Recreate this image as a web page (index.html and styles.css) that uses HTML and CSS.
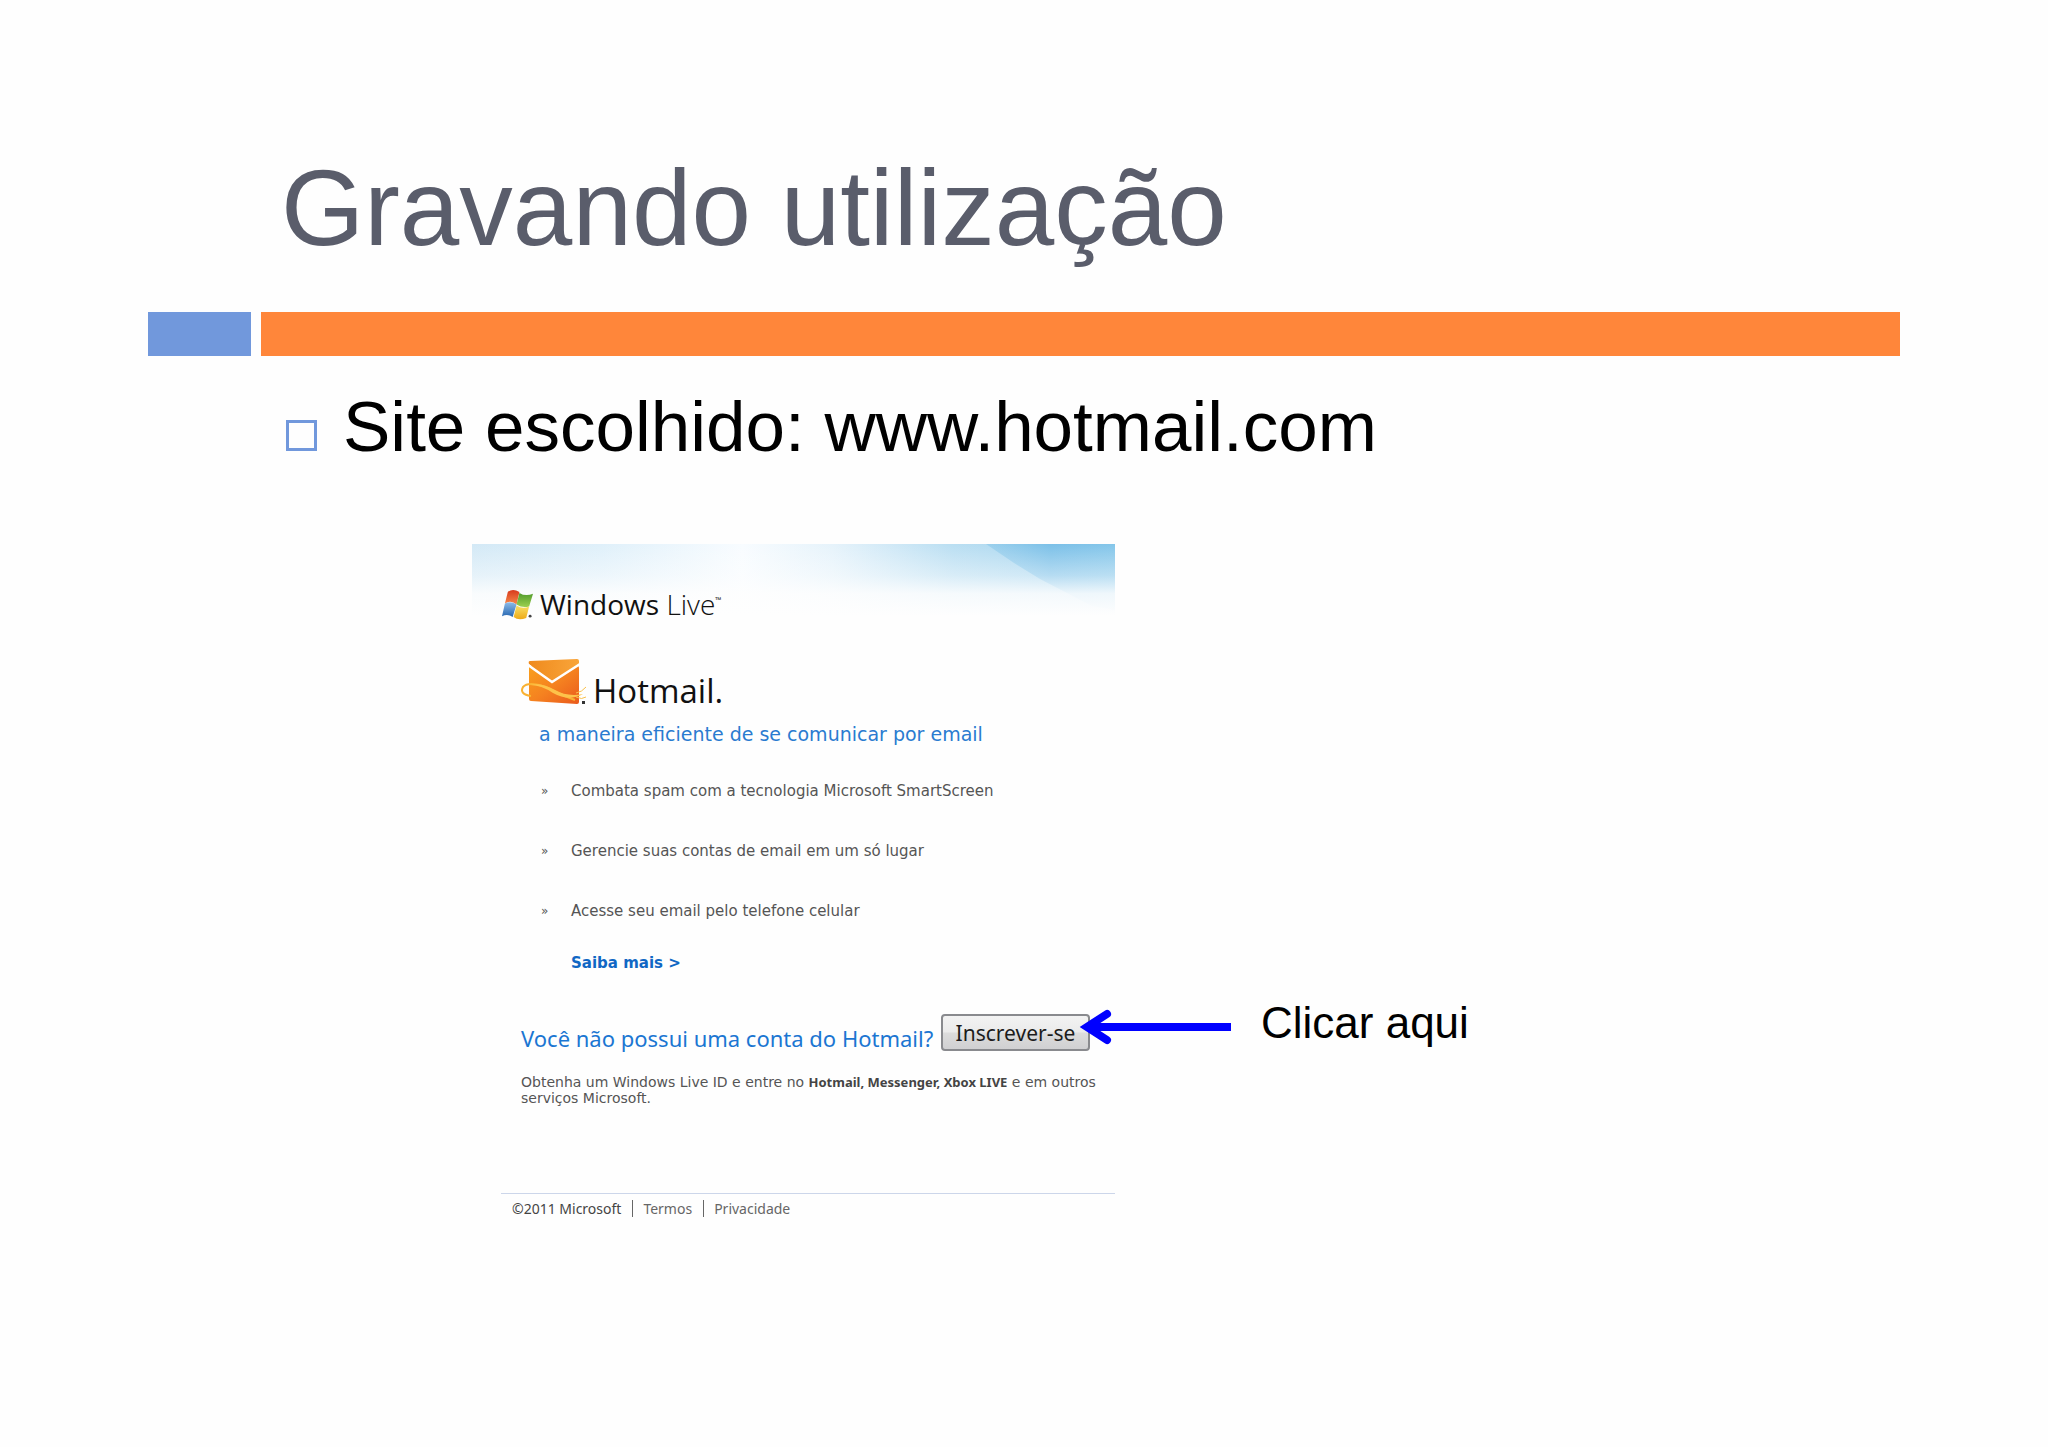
FILE: index.html
```html
<!DOCTYPE html>
<html lang="pt-BR">
<head>
<meta charset="utf-8">
<meta name="viewport" content="width=device-width, initial-scale=1">
<title>Gravando utilização</title>
<link rel="stylesheet" href="styles.css">
</head>
<body>
<main class="slide">
  <h1 class="slide-title">Gravando utilização</h1>
  <div class="slide-rule"><span class="rule-accent"></span><span class="rule-main"></span></div>
  <ul class="slide-points">
    <li class="slide-point">Site escolhido: www.hotmail.com</li>
  </ul>
  <div class="demo">
    <section class="live">
      <header class="live-header">
        <svg class="live-sky" viewBox="0 0 643 90" preserveAspectRatio="none" aria-hidden="true">
          <defs>
            <linearGradient id="sky" x1="0" x2="1" y1="0" y2="0">
              <stop offset="0" stop-color="#d3e9f6"/><stop offset=".2" stop-color="#dff0fa"/>
              <stop offset=".42" stop-color="#f8fcff"/><stop offset=".56" stop-color="#e6f3fb"/>
              <stop offset=".75" stop-color="#b9def2"/><stop offset="1" stop-color="#a0d2ee"/>
            </linearGradient>
            <linearGradient id="ray" x1="0" x2="1" y1="0" y2="0">
              <stop offset="0" stop-color="#9bd0ed"/><stop offset=".5" stop-color="#7bc0e8"/><stop offset="1" stop-color="#84c6ea"/>
            </linearGradient>
            <linearGradient id="fade" x1="0" x2="0" y1="0" y2="1">
              <stop offset="0" stop-color="#fefefe" stop-opacity="0"/><stop offset=".35" stop-color="#fefefe" stop-opacity=".45"/>
              <stop offset=".55" stop-color="#fefefe" stop-opacity=".88"/>
              <stop offset=".8" stop-color="#fefefe"/>
            </linearGradient>
          </defs>
          <rect width="643" height="90" fill="url(#sky)"/>
          <path d="M514 0L542 19L568 35L620 62L643 66V0Z" fill="url(#ray)"/>
          <rect width="643" height="90" fill="url(#fade)"/>
        </svg>
        <div class="live-brand">
          <svg class="flag" viewBox="0 0 32 32" aria-hidden="true">
            <defs>
              <linearGradient id="fr" x2="0" y2="1"><stop stop-color="#d8391c"/><stop offset="1" stop-color="#f58a4b"/></linearGradient>
              <linearGradient id="fg" x2="0" y2="1"><stop stop-color="#4f9a2c"/><stop offset="1" stop-color="#9bd04f"/></linearGradient>
              <linearGradient id="fb" x2="0" y2="1"><stop stop-color="#8cbbe8"/><stop offset="1" stop-color="#2465b0"/></linearGradient>
              <linearGradient id="fy" x2="0" y2="1"><stop stop-color="#f9e166"/><stop offset="1" stop-color="#eea916"/></linearGradient>
            </defs>
            <path d="M6 3Q11 -1 18 3L15 16Q9 11 3 15Z" fill="url(#fr)"/>
            <path d="M18 4Q24 8 32 5L28 18Q21 20 15 16Z" fill="url(#fg)"/>
            <path d="M3 15Q9 12 15 16L11 29Q6 25 0 28Z" fill="url(#fb)"/>
            <path d="M15 17Q21 21 28 18L25 30Q17 33 12 29Z" fill="url(#fy)"/>
            <circle cx="29" cy="28" r="1.500" fill="#444"/>
          </svg>
          <span class="live-name">Windows <span class="live-light">Live</span></span><sup class="live-tm">™</sup>
        </div>
      </header>
      <div class="live-body">
        <h2 class="mail-brand">
          <svg class="mail-icon" viewBox="0 0 66 46" aria-hidden="true">
            <defs>
              <linearGradient id="env" x2="1" y2="1"><stop stop-color="#f9a01c"/><stop offset=".5" stop-color="#f58220"/><stop offset="1" stop-color="#ea5a1c"/></linearGradient>
              <linearGradient id="flap" x2="1" y2="0"><stop stop-color="#ef8a1d"/><stop offset="1" stop-color="#f9a53a"/></linearGradient>
            </defs>
            <path d="M8 7L57 7Q58 7 58 9V43Q58 45 56 45L10 42Q8 42 8 40Z" fill="url(#env)"/>
            <path d="M9 2L56 0Q58 0 58 2V6L31 23L8 5Q7 2 9 2Z" fill="url(#flap)"/>
            <path d="M7 6L31 23L59 5" fill="none" stroke="#fff" stroke-width="2.500"/>
            <path d="M10 37Q-2 35 2 28Q7 22 25 28Q43 37 54 41" fill="none" stroke="#f9b233" stroke-width="2"/>
            <path d="M9 26Q20 23 34 31Q46 38 62 35Q48 43 32 34Q20 26 9 26Z" fill="#fdc24a"/>
            <path d="M55 34Q61 33 65 28M55 38Q61 41 65 38" fill="none" stroke="#f9c04a"/>
            <rect x="61" y="42" width="3" height="3" fill="#333"/>
          </svg>
          <span class="mail-name">Hotmail.</span>
        </h2>
        <p class="tagline">a maneira eficiente de se comunicar por email</p>
        <ul class="features">
          <li class="feature">Combata spam com a tecnologia Microsoft SmartScreen</li>
          <li class="feature">Gerencie suas contas de email em um só lugar</li>
          <li class="feature">Acesse seu email pelo telefone celular</li>
        </ul>
        <a class="more" href="#">Saiba mais &gt;</a>
        <div class="signup">
          <p class="signup-question">Você não possui uma conta do Hotmail?</p>
          <button class="signup-button" type="button">Inscrever-se</button>
        </div>
        <p class="note">Obtenha um Windows Live ID e entre no <strong class="note-products">Hotmail, Messenger, Xbox LIVE</strong> e em outros serviços Microsoft.</p>
      </div>
      <footer class="live-footer">
        <span class="copyright">©2011 Microsoft</span>
        <a class="footer-link" href="#">Termos</a>
        <a class="footer-link" href="#">Privacidade</a>
      </footer>
    </section>
    <aside class="callout">
      <svg class="callout-arrow" viewBox="0 0 152 36" aria-hidden="true">
        <path d="M152 18H14" stroke="#00f" stroke-width="8" fill="none"/>
        <path d="M28 5L8 18L28 31" stroke="#00f" stroke-width="8" stroke-linecap="round" fill="none"/>
      </svg>
      <p class="callout-text">Clicar aqui</p>
    </aside>
  </div>
</main>
</body>
</html>
```
FILE: styles.css
```css
*, *::before { box-sizing: border-box; }
body, h1, h2, p, ul { margin: 0; padding: 0; }
ul { list-style: none; }
body {
  background: #fefefe;
  color: #000;
  font-family: "Liberation Sans", Arial, sans-serif;
}
a { text-decoration: none; }

.slide { padding: 148px 148px 64px; }
.slide-title {
  padding-left: 133px;
  font-size: 107px;
  font-weight: 400;
  line-height: 120px;
  color: #5a5d6b;
}
.slide-rule { display: flex; gap: 10px; height: 44px; margin-top: 44px; }
.rule-accent { width: 103px; background: #7198dc; }
.rule-main { flex: 1; background: #ff863a; }

.slide-points { margin-top: 31px; padding-left: 138px; }
.slide-point {
  display: flex;
  align-items: baseline;
  gap: 26px;
  font-size: 71px;
  line-height: 80px;
}
.slide-point::before {
  content: "";
  flex: none;
  width: 31px;
  height: 31px;
  border: 3px solid #7198dc;
}

.demo { display: flex; align-items: flex-start; margin-top: 77px; padding-left: 324px; }
.live { flex: none; width: 643px; font-family: "DejaVu Sans", Verdana, sans-serif; color: #555; }

.live-header { position: relative; height: 115px; padding: 40px 0 0 30px; }
.live-sky { position: absolute; inset: 0; width: 100%; height: 90px; }
.live-brand {
  position: relative;
  display: flex;
  align-items: center;
  gap: 7px;
  font-family: "Open Sans", "Segoe UI", sans-serif;
  color: #111;
}
.flag { width: 31px; height: 31px; }
.live-name { font-size: 28px; line-height: 40px; }
.live-light { font-weight: 300; }
.live-tm { align-self: flex-start; margin-left: -7px; font-size: 8px; line-height: 32px; }

.live-body { padding-left: 49px; }
.mail-brand { display: flex; align-items: flex-end; gap: 6px; height: 48px; }
.mail-icon { width: 66px; height: 46px; margin-bottom: 2px; }
.mail-name {
  font-family: "Open Sans", "Segoe UI", sans-serif;
  font-size: 33px;
  font-weight: 500;
  line-height: 32px;
  color: #111;
}
.tagline { margin-top: 12px; padding-left: 18px; font-size: 19px; line-height: 30px; color: #2a7bd0; }

.features { display: grid; gap: 36px; margin-top: 30px; padding-left: 20px; }
.feature { display: flex; font-size: 15px; line-height: 24px; }
.feature::before { content: "»"; width: 30px; font-size: 12px; }
.more {
  display: block;
  margin: 28px 0 0 50px;
  font-size: 15px;
  font-weight: 700;
  line-height: 24px;
  color: #1067c4;
}

.signup { display: flex; align-items: flex-end; gap: 11px; margin-top: 39px; font-family: "Noto Sans", Tahoma, sans-serif; }
.signup-question { width: 409px; font-size: 22px; line-height: 25px; white-space: nowrap; color: #1b76d2; }
.signup-button {
  width: 149px;
  height: 37px;
  padding: 0;
  border: 2px solid #898a8e;
  border-radius: 4px;
  background: linear-gradient(#f3f3f3, #ebebeb 48%, #dcdcdc 52%, #d0d0d2);
  font-family: inherit;
  font-size: 21px;
  line-height: 30px;
  color: #1c1c1c;
}
.note { margin-top: 23px; font-size: 14px; line-height: 16px; }
.note-products { font-family: "Noto Sans", Tahoma, sans-serif; font-size: 13px; color: #444; }

.live-footer {
  display: flex;
  margin: 87px 0 0 29px;
  padding: 6px 0 0 11px;
  border-top: 1px solid #ccd6ea;
  font-family: "Noto Sans", Tahoma, sans-serif;
  font-size: 14px;
  line-height: 17px;
}
.copyright { color: #444; }
.footer-link { margin-left: 11px; padding-left: 10px; border-left: 1px solid #666; color: #666; }

.callout { display: flex; position: relative; align-items: center; gap: 30px; margin: 455px 0 0 -36px; }
.callout-arrow { width: 152px; height: 36px; margin-top: 8px; }
.callout-text { font-size: 44px; line-height: 48px; white-space: nowrap; }
```
